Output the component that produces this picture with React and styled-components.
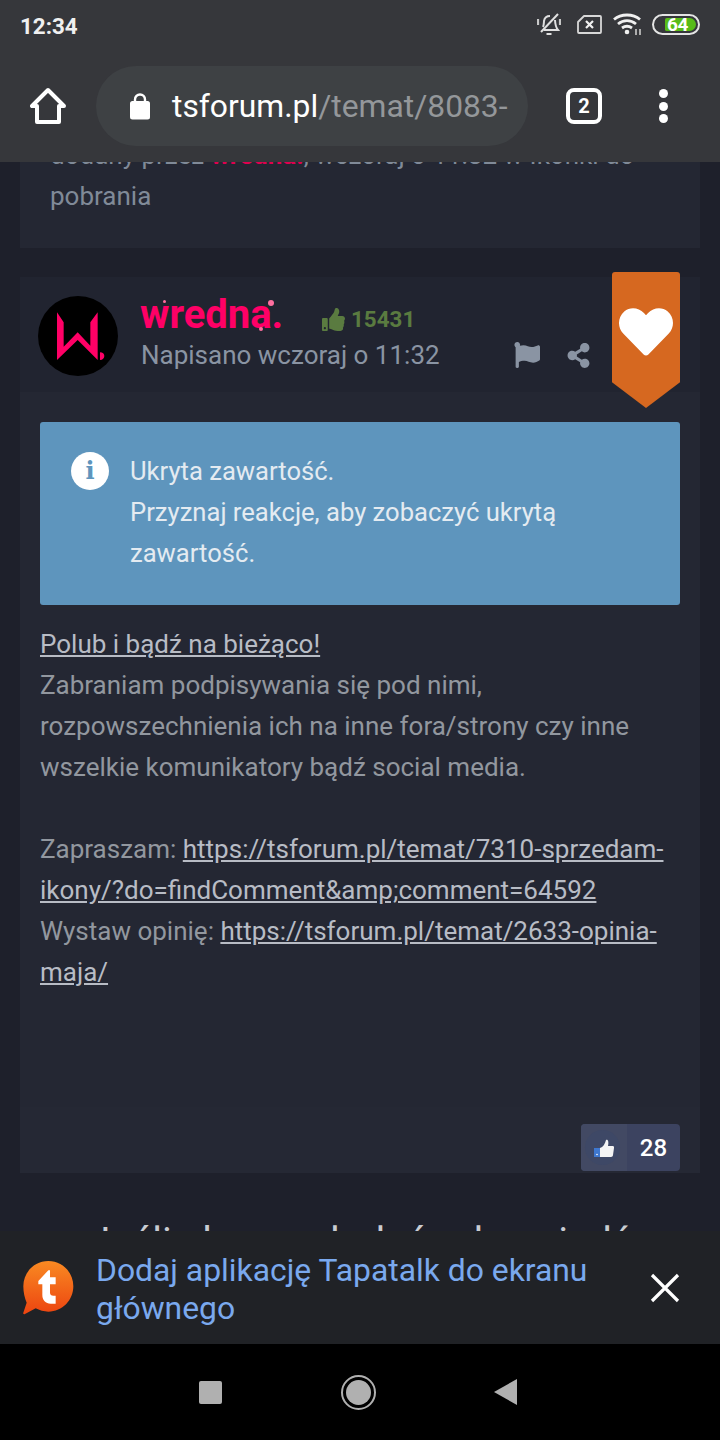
import React from 'react';
import styled, { createGlobalStyle } from 'styled-components';
import { FaThumbsUp, FaFlag, FaShareAlt, FaHeart } from 'react-icons/fa';

const Global = createGlobalStyle`
  html, body { margin: 0; padding: 0; background: #1e202b; }
  * { box-sizing: border-box; }
`;

const Screen = styled.div`
  width: 720px; height: 1440px; display: flex; flex-direction: column; overflow: hidden;
  font-family: Roboto, "Liberation Sans", sans-serif; background: #1e202b;
`;
const Chrome = styled.header`
  height: 162px; flex: none; background: #36373b; display: flex; flex-direction: column;
`;
const StatusBar = styled.div`
  height: 52px; padding: 0 20px; display: flex; align-items: center; justify-content: space-between;
`;
const Time = styled.span`
  color: #f0f0f0; font-size: 22.4px; font-weight: 700;
`;
const StatusIcons = styled.div`
  display: flex; align-items: center; margin-top: -4px;
`;
const Battery = styled.div`
  width: 48px; height: 21px; border: 2px solid #e4e4e4; border-radius: 11px; margin-left: 10px; padding: 2px;
  display: flex;
`;
const BatteryFill = styled.div`
  width: 31px; height: 13px; margin-left: 9px; background: #57bb18; border-radius: 2px 7px 7px 2px;
  color: #fff; font-size: 19px; font-weight: 700; line-height: 13px; text-align: left; padding-left: 2px; letter-spacing: -.3px;
`;
const Toolbar = styled.div`
  height: 110px; padding: 14px 0 16px 30px; display: flex; align-items: center;
`;
const UrlPill = styled.div`
  width: 432px; height: 80px; margin-left: 30px; border-radius: 40px; background: #3e4144; padding-left: 34px;
  display: flex; align-items: center; overflow: hidden; flex: none;
`;
const Url = styled.div`
  margin-left: 22px; font-size: 31.8px; color: #fff; white-space: nowrap;
`;
const UrlPath = styled.span`color: #94979a;`;
const TabCount = styled.div`
  width: 36px; height: 36px; margin-left: 38px; border: 4px solid #fff; border-radius: 8px; color: #fff;
  font-size: 20px; font-weight: 700; display: flex; align-items: center; justify-content: center; flex: none;
`;
const MenuDots = styled.div`
  margin-left: 57px; display: flex; flex-direction: column; gap: 3.5px;
`;
const Dot = styled.i`
  width: 9px; height: 9px; background: #fff; border-radius: 50%; display: block;
`;

const Main = styled.main`
  flex: 1; overflow: hidden; padding: 0 20px;
`;
const TopCard = styled.section`
  margin-top: -27px; padding: 0 30px 31px; background: #242733; font-size: 26px; line-height: 41px; color: #808a98;
`;
const RedName = styled.span`color: #e0004f; font-weight: 700;`;
const Post = styled.article`
  position: relative; margin-top: 29px; background: #242733;
`;
const PostHeader = styled.div`
  height: 115px; background: #212430; padding: 19px 0 0 18px; display: flex;
`;
const Avatar = styled.div`
  width: 80px; height: 80px; border-radius: 50%; background: #000; flex: none;
`;
const Author = styled.div`
  margin-left: 23px; display: flex; flex-direction: column; width: 450px;
`;
const NameRow = styled.div`
  height: 40px; display: flex; align-items: center; margin-top: -2px;
`;
const Name = styled.span`
  position: relative; font-size: 40px; font-weight: 700; color: #ff0066; width: 181px; margin-left: -1px;
`;
const Sparkle = styled.i`
  position: absolute; width: ${p => p.$s}px; height: ${p => p.$s}px; left: ${p => p.$x}px; top: ${p => p.$y}px;
  border-radius: 50%; background: #ff6f9f;
`;
const Likes = styled.span`
  display: flex; align-items: center; gap: 6px; color: #5a7b40; font-size: 22.4px; font-weight: 700; padding-top: 10px; margin-left: 1px;
`;
const MetaRow = styled.div`
  display: flex; align-items: center; margin-top: 1px; height: 40px; color: #8a94a3;
`;
const Posted = styled.span`font-size: 26px; width: 375px; white-space: nowrap;`;
const MetaIcons = styled.span`display: flex; align-items: center; gap: 26px;`;
const Ribbon = styled.div`
  position: absolute; top: -5px; right: 20px; width: 68px; height: 136px; background: #d66820; border-radius: 3px 3px 0 0;
  clip-path: polygon(0 0, 100% 0, 100% 81%, 50% 100%, 0 81%);
  display: flex; justify-content: center; padding-top: 33px; color: #fff;
`;
const PostBody = styled.div`
  padding: 30px 20px 0; font-size: 26px; line-height: 41px; color: #92979f; height: 715px;
`;
const InfoBox = styled.div`
  height: 183px; background: #5e95bd; border-radius: 3px; padding: 29px 30px 0 31px; display: flex; color: #e4ebf1; margin-bottom: 19px; font-size: 25.6px;
`;
const InfoIcon = styled.div`
  width: 38px; height: 38px; border-radius: 50%; background: #fff; color: #5e95bd; flex: none; margin-right: 21px; margin-top: 1px;
  display: flex; align-items: center; justify-content: center;
  font-family: "DejaVu Serif", serif; font-weight: 700; font-size: 24px; line-height: 1;
`;
const Link = styled.a`color: #b8bcc5; text-decoration: underline;`;
const PostFooter = styled.div`
  height: 66px; padding: 17px 20px 0 0; display: flex; justify-content: flex-end; background: #252834;
`;
const Reaction = styled.div`
  width: 99px; height: 47px; background: #3c4360; border-radius: 4px; display: flex; overflow: hidden;
`;
const ReactionIcon = styled.div`
  width: 46px; background: #424963; display: flex; align-items: center; padding-left: 4px; flex: none;
`;
const ReactionDisc = styled.div`
  width: 35px; height: 35px; border-radius: 50%; background: #3e4866; display: flex; align-items: center; justify-content: center;
`;
const ReactionCount = styled.div`
  flex: 1; display: flex; align-items: center; justify-content: center; color: #fff; font-size: 24px; font-weight: 500;
`;
const ReplyPrompt = styled.h2`
  margin: 50px 0 0; text-align: center; font-size: 40px; line-height: 40px; font-weight: 400; color: #c9ccd2; white-space: nowrap;
`;

const Banner = styled.aside`
  height: 113px; flex: none; background: #202226; display: flex; align-items: center; padding-left: 20px;
`;
const BannerText = styled.div`
  width: 520px; margin: 2px 34px 0 20px; font-size: 31.85px; line-height: 38px; color: #7aa9ee;
`;
const NavBar = styled.nav`
  height: 96px; flex: none; background: #000; display: flex; align-items: center; padding-left: 199px;
`;
const NavSquare = styled.div`
  width: 23px; height: 23px; background: #b0b0b0; border-radius: 2px;
`;
const NavCircle = styled.div`
  width: 35px; height: 35px; margin-left: 119px; border: 2.5px solid #b0b0b0; border-radius: 50%; padding: 3px;
  &::after { content: ""; display: block; width: 100%; height: 100%; border-radius: 50%; background: #b0b0b0; }
`;
const NavBack = styled.div`
  width: 23px; height: 26px; margin-left: 118px; background: #b0b0b0; clip-path: polygon(100% 0, 100% 100%, 0 50%);
`;

const BellOff = () => (
  <svg width="24" height="24" viewBox="0 0 24 24" fill="none" stroke="#e0e0e0" strokeWidth="2" style={{ flex: 'none' }}>
    <path d="M4 20L21 2" />
    <path d="M6 15c1-2 .800-4 1-6 .500-3 3-5 6-5M18 8c.200 4 .500 7 3 10H7" />
    <path d="M9.500 22h5" />
    <path d="M1 7v6M23 7v6" strokeWidth="2.200" stroke="#c8c8c8" />
  </svg>
);
const SimOff = () => (
  <svg width="25" height="19" viewBox="0 0 25 19" fill="none" stroke="#d8d8d8" strokeWidth="1.800" strokeLinejoin="round" style={{ flex: 'none', marginLeft: 16 }}>
    <path d="M7 1h16a1 1 0 0 1 1 1v15a1 1 0 0 1-1 1H2a1 1 0 0 1-1-1V7z" />
    <path d="M9 6l7 7M16 6l-7 7" strokeWidth="2.200" stroke="#f0f0f0" />
  </svg>
);
const Wifi = () => (
  <svg width="29" height="22" viewBox="0 0 29 22" fill="none" stroke="#f0f0f0" strokeWidth="2.800" style={{ flex: 'none', marginLeft: 11 }}>
    <path d="M1 6.500C8 .500 20 .500 27 6.500" />
    <path d="M5 11c5.500-4.500 12.500-4.500 18 0" />
    <path d="M9 15c3.500-2.500 6.500-2.500 10 0" />
    <circle cx="14" cy="19" r="2.300" fill="#f0f0f0" stroke="none" />
    <path d="M23 16v6M27 16v6" strokeWidth="1.800" stroke="#bbb" />
  </svg>
);
const Home = () => (
  <svg width="36" height="38" viewBox="0 0 36 38" fill="none" stroke="#fff" strokeWidth="4" strokeLinejoin="round" style={{ flex: 'none' }}>
    <path d="M18 3L2 19h5v16h22V19h5z" />
  </svg>
);
const Lock = () => (
  <svg width="20" height="27" viewBox="0 0 20 27" fill="#fff" style={{ flex: 'none' }}>
    <path d="M5 9V6.500a5 5 0 0 1 10 0V9" fill="none" stroke="#fff" strokeWidth="2.400" />
    <rect y="8" width="20" height="18.500" rx="2.500" />
  </svg>
);
const WLogo = () => (
  <svg width="80" height="80" viewBox="6 6 240 240" fill="#ff0066" style={{ display: 'block' }}>
    <path d="M63 55L83 85V158L125 115L163 155V85L185 55V198L125 138L63 198Z" />
    <path d="M192 175C200 175 205 180 205 186C205 192 200 198 192 198Z" />
  </svg>
);
const TapatalkLogo = () => (
  <svg width="56" height="57" viewBox="15 24 168 171" style={{ flex: 'none' }}>
    <defs>
      <linearGradient id="tt" x1="0" y1="0" x2="0" y2="1">
        <stop offset="0" stopColor="#f98a22" />
        <stop offset="1" stopColor="#ec4410" />
      </linearGradient>
    </defs>
    <path d="M100 30C142 30 175 64 175 106C175 148 142 182 100 182C87 182 73 178 62 172L30 189C26 191 23 188 25 185L35 155C29 141 25 124 25 106C25 64 58 30 100 30Z" fill="url(#tt)" />
    <path d="M100 58L105 58V79H122V100H105V125C105 131 109 134 115 134H122V158H107C92 158 82 148 82 132V100H70V90Z" fill="#fff" />
  </svg>
);
const CloseIcon = () => (
  <svg width="30" height="30" viewBox="0 0 30 30" stroke="#fff" strokeWidth="3.200" style={{ flex: 'none' }}>
    <path d="M2 2l26 26M28 2L2 28" />
  </svg>
);
const ThumbBadge = () => (
  <svg width="20" height="18" viewBox="0 0 20 18" style={{ marginLeft: 2 }}>
    <rect x="0" y="9" width="7" height="9" fill="#3f78cf" />
    <circle cx="3" cy="15.500" r=".8" fill="#fff" />
    <path d="M6 9c3-1 5-4 6-8 2-1 3 2 2 6h5c1 0 1 1 1 2l-1 7c0 1-1 2-2 2H6z" fill="#f4f4f4" />
  </svg>
);

export default function App() {
  return (
    <Screen>
      <Global />
      <Chrome>
        <StatusBar>
          <Time>12:34</Time>
          <StatusIcons>
            <BellOff />
            <SimOff />
            <Wifi />
            <Battery>
              <BatteryFill>64</BatteryFill>
            </Battery>
          </StatusIcons>
        </StatusBar>
        <Toolbar>
          <Home />
          <UrlPill>
            <Lock />
            <Url>tsforum.pl<UrlPath>/temat/8083-</UrlPath></Url>
          </UrlPill>
          <TabCount>2</TabCount>
          <MenuDots><Dot /><Dot /><Dot /></MenuDots>
        </Toolbar>
      </Chrome>
      <Main>
        <TopCard>
          dodany przez <RedName>wredna.</RedName>, wczoraj o 11:32 w Ikonki do pobrania
        </TopCard>
        <Post>
          <PostHeader>
            <Avatar><WLogo /></Avatar>
            <Author>
              <NameRow>
                <Name>
                  wredna.
                  <Sparkle $s={6} $x={128} $y={9} />
                  <Sparkle $s={4} $x={119} $y={36} />
                  <Sparkle $s={3} $x={23} $y={9} />
                </Name>
                <Likes><FaThumbsUp size={23} />15431</Likes>
              </NameRow>
              <MetaRow>
                <Posted>Napisano wczoraj o 11:32</Posted>
                <MetaIcons>
                  <FaFlag size={26} />
                  <FaShareAlt size={25} />
                </MetaIcons>
              </MetaRow>
            </Author>
          </PostHeader>
          <Ribbon><FaHeart size={54} /></Ribbon>
          <PostBody>
            <InfoBox>
              <InfoIcon>i</InfoIcon>
              <div>Ukryta zawartość.<br />Przyznaj reakcje, aby zobaczyć ukrytą zawartość.</div>
            </InfoBox>
            <Link>Polub i bądź na bieżąco!</Link><br />
            Zabraniam podpisywania się pod nimi, rozpowszechnienia ich na inne fora/strony czy inne wszelkie komunikatory bądź social media.<br /><br />
            Zapraszam: <Link>https://tsforum.pl/temat/7310-sprzedam-ikony/?do=findComment&amp;amp;comment=64592</Link><br />
            Wystaw opinię: <Link>https://tsforum.pl/temat/2633-opinia-maja/</Link>
          </PostBody>
          <PostFooter>
            <Reaction>
              <ReactionIcon><ReactionDisc><ThumbBadge /></ReactionDisc></ReactionIcon>
              <ReactionCount>28</ReactionCount>
            </Reaction>
          </PostFooter>
        </Post>
        <ReplyPrompt>Jeśli chcesz dodać odpowiedź</ReplyPrompt>
      </Main>
      <Banner>
        <TapatalkLogo />
        <BannerText>Dodaj aplikację Tapatalk do ekranu głównego</BannerText>
        <CloseIcon />
      </Banner>
      <NavBar>
        <NavSquare />
        <NavCircle />
        <NavBack />
      </NavBar>
    </Screen>
  );
}
